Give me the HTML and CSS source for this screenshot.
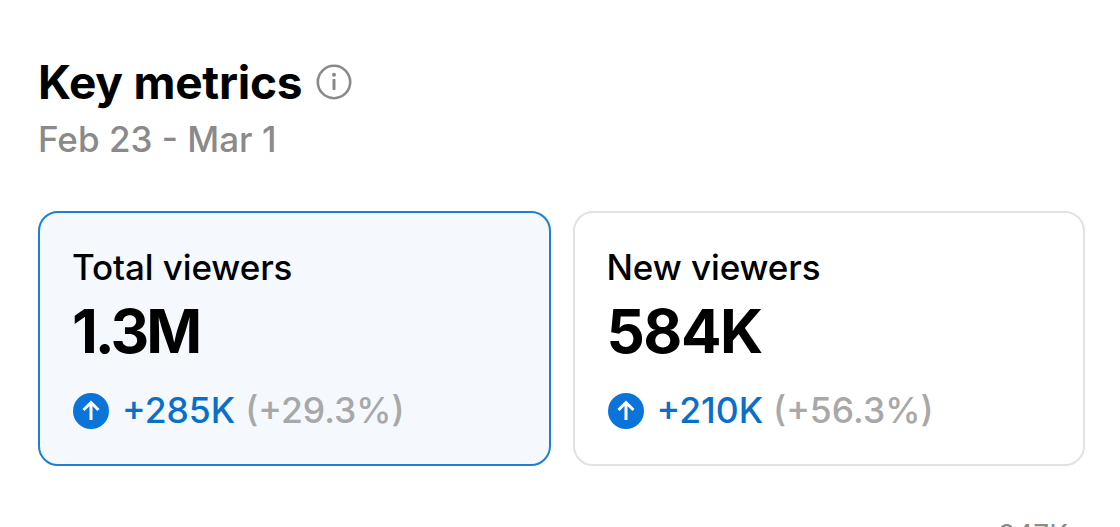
FILE: index.html
```html
<!DOCTYPE html>
<html>
	<head>
		<link rel="stylesheet" href="styles.css">
	</head>
	<body>
		<div class="header">
			<div class="title-row">
				<h1>Key metrics</h1>
				<svg class="info" width="36" height="36" viewBox="0 0 36 36">
					<circle cx="18" cy="18" r="16.2" fill="none" stroke="#8a8a8a" stroke-width="2.6"/>
					<circle cx="18" cy="10.8" r="2" fill="#8a8a8a"/>
					<rect x="16.5" y="15" width="3" height="11" rx="0.8" fill="#8a8a8a"/>
				</svg>
			</div>
			<div class="dates">Feb 23 - Mar 1</div>
		</div>

		<div class="cards">
			<div class="card selected">
				<div class="label">Total viewers</div>
				<div class="value tight">1.3M</div>
				<div class="change">
					<svg class="arrow" width="36" height="36" viewBox="0 0 36 36">
						<circle cx="18" cy="18" r="18" fill="#0a74d9"/>
						<path d="M18 27V10M10.5 17L18 9.5L25.5 17" fill="none" stroke="#fff" stroke-width="3"/>
					</svg>
					<span class="delta">+285K</span>
					<span class="pct">(+29.3%)</span>
				</div>
			</div>
			<div class="card">
				<div class="label">New viewers</div>
				<div class="value">584K</div>
				<div class="change">
					<svg class="arrow" width="36" height="36" viewBox="0 0 36 36">
						<circle cx="18" cy="18" r="18" fill="#0a74d9"/>
						<path d="M18 27V10M10.5 17L18 9.5L25.5 17" fill="none" stroke="#fff" stroke-width="3"/>
					</svg>
					<span class="delta">+210K</span>
					<span class="pct">(+56.3%)</span>
				</div>
			</div>
		</div>

		<div class="chart-tick">847K</div>
	</body>
</html>
```

FILE: styles.css
```css
html {
	height: 100%;
	overflow: hidden;
}

body {
	margin: 0;
	height: 527px;
	padding: 54px 35px 0 38px;
	box-sizing: border-box;
	background-color: #fff;
	font-family: "Inter", "Liberation Sans", sans-serif;
	color: #000;
	overflow: hidden;
}

.title-row {
	display: flex;
	align-items: center;
	gap: 14px;
	height: 56px;
}

h1 {
	margin: 0;
	font-size: 46px;
	line-height: 56px;
	font-weight: 700;
	letter-spacing: -0.25px;
}

.info {
	flex: none;
}

.dates {
	margin-top: 2px;
	font-size: 35px;
	line-height: 54px;
	font-weight: 500;
	color: #8a8a8a;
}

.cards {
	display: flex;
	gap: 22px;
	margin-top: 45px;
}

.card {
	flex: 1;
	height: 255px;
	box-sizing: border-box;
	padding: 32px 34px 0 34px;
	border: 2px solid #e2e2e2;
	border-radius: 20px;
	background-color: #fff;
}

.card.selected {
	border-color: #1f7fd0;
	background-color: #f5f9fe;
}

.label {
	font-size: 35px;
	line-height: 44px;
	font-weight: 500;
	margin-left: -2px;
	letter-spacing: -0.1px;
}

.value {
	margin-top: 6px;
	margin-left: -2px;
	font-size: 60px;
	line-height: 72px;
	font-weight: 700;
	letter-spacing: -1.5px;
}

.value.tight {
	letter-spacing: -3px;
}

.change {
	display: flex;
	align-items: center;
	gap: 10px;
	margin-top: 22px;
	font-size: 35.5px;
	line-height: 44px;
	font-weight: 500;
}

.arrow {
	flex: none;
	margin-right: 3px;
	margin-left: -1px;
}

.delta {
	color: #0a6fc9;
}

.pct {
	color: #a8a8a8;
}

.chart-tick {
	margin-top: 52px;
	text-align: right;
	padding-right: 17px;
	font-size: 28px;
	line-height: 34px;
	color: #8a8a8a;
}
```
